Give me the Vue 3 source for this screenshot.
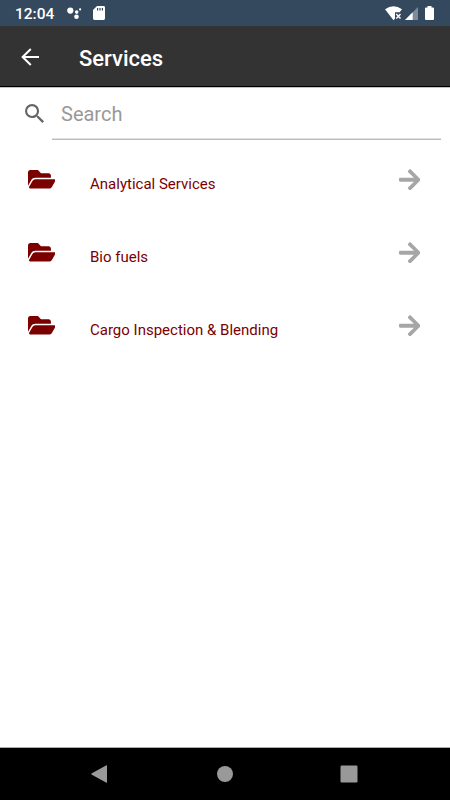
<script setup>
import { ref, computed } from 'vue'

const search = ref('')

const services = [
  { id: 1, name: 'Analytical Services' },
  { id: 2, name: 'Bio fuels' },
  { id: 3, name: 'Cargo Inspection & Blending' }
]

const filteredServices = computed(() => {
  const term = search.value.trim().toLowerCase()
  return services.filter((item) => item.name.toLowerCase().includes(term))
})
</script>

<template>
  <div class="screen">
    <!-- status bar -->
    <div class="status-bar">
      <span class="status-time">12:04</span>
      <svg class="status-assistant" viewBox="0 0 16 14">
        <circle cx="3.3" cy="4.6" r="3.1" />
        <circle cx="9.7" cy="6.1" r="1.8" />
        <circle cx="9.5" cy="10.8" r="2.3" />
        <circle cx="13.1" cy="3.4" r="1.1" />
      </svg>
      <svg class="status-sd" viewBox="0 0 12 14">
        <path fill-rule="evenodd" d="M4 0h6.6Q12 0 12 1.4v11.2Q12 14 10.6 14H1.4Q0 14 0 12.6V4zM4 2v2.6h1.2V2zM6.4 2v2.6h1.2V2zM8.8 2v2.6H10V2z" />
      </svg>
      <div class="status-right">
        <svg class="status-wifi" viewBox="0 0 18 15">
          <path d="M0 3.2Q8.5-2.6 17 3.2L14.6 6.3H10v6.1L8.5 14.2z" />
          <path class="wifi-cross" d="M11.3 8l4.2 4.4M15.5 8l-4.2 4.4" />
        </svg>
        <svg class="status-signal" viewBox="0 0 13 13">
          <path class="signal-dim" d="M13 0v13H0z" />
          <path d="M7.7 5.3V13H0z" />
        </svg>
        <svg class="status-battery" viewBox="0 0 9 14">
          <path d="M2.5 0h4v1.4H8Q9 1.4 9 2.4V13q0 1-1 1H1q-1 0-1-1V2.4q0-1 1-1h1.5z" />
        </svg>
      </div>
    </div>

    <header class="header">
      <button type="button" class="back-btn" aria-label="Back">
        <svg viewBox="0 0 18 18">
          <path d="M18 9H1.6M9.8 1L1.6 9l8.2 8" />
        </svg>
      </button>
      <h1 class="header-title">Services</h1>
    </header>

    <main class="content">
      <div class="search">
        <svg class="search-icon" viewBox="3 3 17.5 17.5">
          <path d="M15.5 14h-.79l-.28-.27A6.471 6.471 0 0 0 16 9.5 6.5 6.5 0 1 0 9.5 16c1.61 0 3.09-.59 4.23-1.57l.27.28v.79l5 4.99L20.49 19l-4.99-5zm-6 0C7.01 14 5 11.99 5 9.5S7.01 5 9.5 5 14 7.01 14 9.5 11.99 14 9.5 14z" />
        </svg>
        <input v-model="search" class="search-input" type="text" placeholder="Search" />
      </div>

      <ul class="service-list">
        <li v-for="item in filteredServices" :key="item.id" class="service-item">
          <svg class="service-folder" viewBox="0 64 576 384">
            <path d="M572.694 292.093L500.27 416.248A63.997 63.997 0 0 1 444.989 448H45.025c-18.523 0-30.064-20.093-20.731-36.093l72.424-124.155A64 64 0 0 1 152 256h399.964c18.523 0 30.064 20.093 20.73 36.093zM152 224h328v-48c0-26.51-21.49-48-48-48H272l-64-64H48C21.49 64 0 85.49 0 112v278.046l69.077-118.418C86.214 242.25 117.989 224 152 224z" />
          </svg>
          <span class="service-name">{{ item.name }}</span>
          <svg class="service-arrow" viewBox="0 32 448 448">
            <path d="M190.5 66.9l22.2-22.2c9.4-9.4 24.6-9.4 33.9 0L441 239c9.4 9.4 9.4 24.6 0 33.9L246.6 467.3c-9.4 9.4-24.6 9.4-33.9 0l-22.2-22.2c-9.5-9.5-9.3-25 .4-34.3L311.4 296H24c-13.3 0-24-10.7-24-24v-32c0-13.3 10.7-24 24-24h287.4L190.9 101.2c-9.8-9.3-10-24.8-.4-34.3z" />
          </svg>
        </li>
      </ul>
    </main>

    <!-- system navigation -->
    <nav class="nav-bar">
      <svg class="nav-icon" viewBox="0 0 18 18">
        <path d="M15.4.3Q16 0 16 .8v16.4q0 .8-.6.5L.5 9.4Q0 9 .5 8.6z" />
      </svg>
      <svg class="nav-icon" viewBox="0 0 18 18">
        <circle cx="9" cy="9" r="8" />
      </svg>
      <svg class="nav-icon" viewBox="0 0 18 18">
        <rect x="0.5" y="0.5" width="17" height="17" rx="1.2" />
      </svg>
    </nav>
  </div>
</template>

<style>
body {
  margin: 0;
}
</style>

<style scoped>
.screen {
  display: flex;
  flex-direction: column;
  height: 100vh;
  background: #fff;
  font-family: Roboto, "Liberation Sans", sans-serif;
}

.status-bar {
  display: flex;
  align-items: center;
  box-sizing: border-box;
  height: 26px;
  padding: 0 16px 0 15px;
  background: #34495e;
  color: #fff;
  fill: #fff;
}

.status-time {
  width: 52px;
  padding-top: 2px;
  font-size: 15.5px;
  font-weight: 500;
  line-height: 24px;
}

.status-assistant {
  width: 16px;
  height: 14px;
}

.status-sd {
  width: 12px;
  height: 14px;
  margin-left: 10px;
}

.status-right {
  display: flex;
  align-items: center;
  margin-left: auto;
}

.status-wifi {
  width: 18px;
  height: 15px;
}

.wifi-cross {
  fill: none;
  stroke: #fff;
  stroke-width: 1.4;
}

.status-signal {
  width: 13px;
  height: 13px;
  margin-left: 2px;
}

.signal-dim {
  fill: #7d8c9b;
}

.status-battery {
  width: 9px;
  height: 14px;
  margin-left: 7px;
}

.header {
  display: flex;
  align-items: center;
  box-sizing: border-box;
  height: 61px;
  padding: 0 21px;
  background: #333;
  border-bottom: 1px solid #000;
}

.back-btn {
  display: flex;
  padding: 1px 0 0;
  border: none;
  background: none;
  cursor: pointer;
}

.back-btn svg {
  width: 18px;
  height: 18px;
  fill: none;
  stroke: #fff;
  stroke-width: 2;
}

.header-title {
  margin: 5px 0 0 40px;
  color: #fff;
  font-size: 22px;
  font-weight: 500;
  line-height: 28px;
}

.content {
  flex: 1;
  border-top: 1px solid #c4c4c4;
}

.search {
  display: flex;
  align-items: center;
  height: 52px;
  padding: 0 9px 0 25px;
}

.search-icon {
  flex: none;
  width: 19px;
  height: 19px;
  margin: 0 8px 2px 0;
  fill: #656565;
}

.search-input {
  flex: 1;
  box-sizing: border-box;
  min-width: 0;
  height: 52px;
  padding: 1px 0 0 9px;
  border: none;
  border-bottom: 1px solid #bdbdbd;
  box-shadow: inset 0 -1px #e0e0e0;
  outline: none;
  background: none;
  color: #333;
  font-family: inherit;
  font-size: 20px;
}

.search-input::placeholder {
  color: #999;
  opacity: 1;
}

.service-list {
  margin: 0;
  padding: 3px 0 0;
  list-style: none;
}

.service-item {
  display: flex;
  align-items: center;
  height: 73px;
  padding: 0 30px 0 27.5px;
}

.service-folder {
  width: 27.5px;
  height: 18.5px;
  fill: #7b0000;
}

.service-name {
  flex: 1;
  margin: 8px 0 0 35px;
  color: #7b0000;
  font-size: 15px;
  line-height: 20px;
}

.service-arrow {
  width: 21.5px;
  height: 21.5px;
  fill: #a6a6a6;
}

.nav-bar {
  display: flex;
  align-items: center;
  justify-content: space-between;
  box-sizing: border-box;
  height: 53px;
  padding: 0 92px 0 91px;
  background: #000;
  border-top: 1px solid #aaa;
}

.nav-icon {
  width: 18px;
  height: 18px;
  fill: #999;
}
</style>
